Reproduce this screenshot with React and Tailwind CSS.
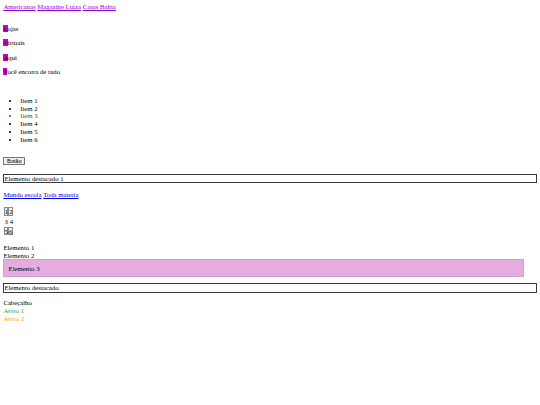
import React from 'react'

const lojas = [
  { href: '#americanas', label: 'Americanas' },
  { href: '#magalu', label: 'Magazine Luiza' },
  { href: '#casasbahia', label: 'Casas Bahia' },
]

const frases = ['Lojas', 'Virtuais', 'Aqui', 'Você encotra de tudo']

const itens = ['Item 1', 'Item 2', 'Item 3', 'Item 4', 'Item 5', 'Item 6']

function Celula({ children, boxed }) {
  return (
    <span
      className={
        boxed
          ? 'w-[10.5px] h-[20px] flex items-center justify-center border border-[#8a8a8a] bg-[#f4f4f4] leading-[17px]'
          : 'w-[10.5px] h-[18.4px] flex items-center justify-center leading-[18.4px]'
      }
    >
      {children}
    </span>
  )
}

export default function App() {
  return (
    // the page is laid out at 1280px wide and zoomed down to the 540px window
    <div className="[zoom:0.421875] bg-white min-h-[960px] px-2 pt-2 pb-8 flex flex-col font-['Liberation_Serif',serif] text-[16px] leading-[18.4px] text-black">
      {/* Links das lojas */}
      <nav className="flex gap-[4px]">
        {lojas.map((l) => (
          <a key={l.label} href={l.href} className="text-[#9400d3] underline">
            {l.label}
          </a>
        ))}
      </nav>

      {/* Frases */}
      <section className="mt-[33px] flex flex-col gap-[15.6px]">
        {frases.map((f) => (
          <p key={f}>
            <span className="bg-[#cc00cc] text-[#2a002a]">{f.charAt(0)}</span>
            {f.slice(1)}
          </p>
        ))}
      </section>

      {/* Lista */}
      <ul className="mt-[50px] pl-[40px] list-disc">
        {itens.map((item) => (
          <li key={item} className={item === 'Item 3' ? 'text-[#008000]' : ''}>
            {item}
          </li>
        ))}
      </ul>

      <button className="mt-[32px] self-start h-[20px] px-[6px] border border-[#767676] rounded-[2px] bg-[#efefef] font-['Liberation_Sans',sans-serif] text-[13.33px] leading-[15px] text-black">
        Botão
      </button>

      <div className="mt-[19px] border-2 border-[#3a3a3a]">Elemento destacado 1</div>

      <div className="mt-[19px] flex gap-[4px]">
        <a href="#mundo" className="text-[#0000ee] underline">Mundo escola</a>
        <a href="#toda" className="text-[#0000ee] underline">Toda materia</a>
      </div>

      {/* Grade */}
      <div className="mt-[20px] ml-[1.5px] flex flex-col gap-[4px]">
        <div className="flex">
          <Celula boxed>1</Celula>
          <Celula boxed>2</Celula>
        </div>
        <div className="flex gap-[2px]">
          <Celula>3</Celula>
          <Celula>4</Celula>
        </div>
        <div className="flex">
          <Celula boxed>5</Celula>
          <Celula boxed>6</Celula>
        </div>
      </div>

      <div className="mt-[19.6px]">
        <div>Elemento 1</div>
        <div>Elemento 2</div>
      </div>
      <div className="w-[1235px] border border-[#cfa3ca] bg-[#e6acdf] p-[10px]">Elemento 3</div>

      <div className="mt-[13px] border-2 border-[#3a3a3a]">Elemento destacado</div>

      <div className="mt-[15px]">
        <div>Cabeçalho</div>
        <div className="text-[#28a745]">Aviso 1</div>
        <div className="text-[#ffa500]">Aviso 2</div>
      </div>
    </div>
  )
}
